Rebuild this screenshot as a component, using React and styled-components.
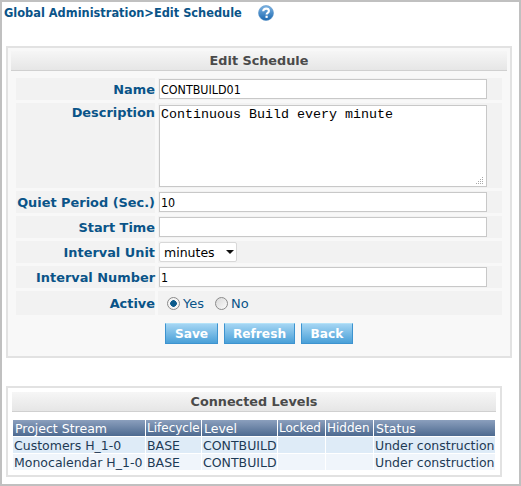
import styled, { createGlobalStyle } from 'styled-components';

const Global = createGlobalStyle`
  html, body { margin: 0; padding: 0; background: #fff; }
  body { font-family: "DejaVu Sans", Verdana, sans-serif; font-size: 12px; }
`;

const Frame = styled.div`
  box-sizing: border-box;
  width: 521px;
  height: 486px;
  border: 2px solid #c0c0c0;
  padding: 0 4px;
  background: #fff;
`;

const Crumbs = styled.div`
  display: flex;
  align-items: center;
  height: 22px;
  margin-left: -2px;
  font-size: 11.4px;
  font-weight: bold;
  color: #0a5488;
`;

const HelpIcon = styled.svg`
  width: 16px;
  height: 16px;
  margin-left: 16px;
`;

const Panel = styled.section`
  box-sizing: border-box;
  width: ${p => p.$width}px;
  height: ${p => p.$height}px;
  margin-top: ${p => p.$top}px;
  padding: ${p => p.$pad};
  border: 2px solid #e2e2e2;
  background: ${p => p.$bg};
`;

const PanelTitle = styled.h2`
  box-sizing: border-box;
  height: 20px;
  margin: 0;
  border-bottom: 1px solid #d0d0d0;
  background: linear-gradient(#f6f6f6, #e6e6e6);
  font-size: 12.8px;
  line-height: 20px;
  font-weight: bold;
  text-align: center;
  color: #4a4a4a;
`;

const Form = styled.div`
  display: grid;
  grid-template-columns: 139px 344px;
  column-gap: 3px;
  row-gap: 3px;
  margin: 7px 0 0 5px;
`;

const Label = styled.div`
  box-sizing: border-box;
  height: ${p => p.$h}px;
  padding: ${p => (p.$top ? '2px 0 0' : '0')};
  background: #f2f2f2;
  font-size: 12.9px;
  font-weight: bold;
  line-height: ${p => (p.$top ? '15px' : `${p.$h + 2}px`)};
  text-align: right;
  color: #0a5488;
`;

const Value = styled.div`
  box-sizing: border-box;
  display: flex;
  align-items: ${p => (p.$top ? 'flex-start' : 'center')};
  height: ${p => p.$h}px;
  padding: ${p => (p.$top ? '2px 15px 0 1px' : '0 15px 0 1px')};
  background: #f2f2f2;
`;

const TextInput = styled.input`
  box-sizing: border-box;
  width: 328px;
  height: 20px;
  padding: 0 1px;
  border: 1px solid #c8c8c8;
  outline: none;
  background: #fff;
  font-family: "DejaVu Sans Condensed", "DejaVu Sans", sans-serif;
  font-size: 12.4px;
  color: #000;
`;

const AreaWrap = styled.div`
  position: relative;
  width: 328px;
  height: 82px;
`;

const TextArea = styled.textarea`
  display: block;
  box-sizing: border-box;
  width: 100%;
  height: 100%;
  margin: 0;
  padding: 1px;
  border: 1px solid #c8c8c8;
  outline: none;
  resize: none;
  background: #fff;
  font-family: "Liberation Mono", monospace;
  font-size: 13.33px;
  color: #000;
`;

const Grip = styled.svg`
  position: absolute;
  right: 3px;
  bottom: 3px;
  width: 8px;
  height: 7px;
`;

const SelectWrap = styled.div`
  position: relative;
  width: 78px;
  height: 20px;
`;

const Select = styled.select`
  box-sizing: border-box;
  width: 100%;
  height: 100%;
  padding: 0 0 0 4px;
  border: 1px solid #d8d8d8;
  border-radius: 2px;
  outline: none;
  appearance: none;
  background: #fff;
  font-family: "DejaVu Sans", sans-serif;
  font-size: 12.5px;
  color: #000;
`;

const Caret = styled.span`
  position: absolute;
  top: 8px;
  right: 3px;
  width: 0;
  height: 0;
  border: 4px solid transparent;
  border-top: 4px solid #111;
  border-bottom: 0;
  pointer-events: none;
`;

const RadioGroup = styled.div`
  display: flex;
  align-items: center;
  padding-left: 8px;
  color: #0a5488;
  font-size: 13px;
`;

const RadioLabel = styled.label`
  display: flex;
  align-items: center;
  margin-right: 11px;
`;

const Radio = styled.input`
  appearance: none;
  box-sizing: border-box;
  width: 13px;
  height: 13px;
  margin: 1px 3px 0 0;
  border: 1px solid #8a8a8a;
  border-radius: 50%;
  background: ${p => (p.checked
    ? 'radial-gradient(circle, #0b5a8c 0 3px, #f4f4f4 3.6px)'
    : 'linear-gradient(135deg, #d8d8d8, #fbfbfb)')};
`;

const Buttons = styled.div`
  display: flex;
  gap: 6px;
  margin: 8px 0 0 154px;
`;

const Button = styled.button`
  box-sizing: border-box;
  height: 21px;
  padding: 0;
  width: ${p => p.$w}px;
  border: 1px solid #3d93cf;
  border-top-color: #b4e2f8;
  background: linear-gradient(#a4d5f3, #4aa0d8);
  font-family: "DejaVu Sans", sans-serif;
  font-size: 12.2px;
  font-weight: bold;
  color: #fff;
`;

const Table = styled.table`
  width: 484px;
  margin: 7px 0 0;
  border-collapse: separate;
  border-spacing: 1px;
  table-layout: fixed;
  font-size: 12.5px;
`;

const Th = styled.th`
  height: 16px;
  padding: 0 0 0 ${p => (p.$tight ? 1 : 2)}px;
  background: linear-gradient(#8b9fbd, #4d6a90);
  font-size: ${p => (p.$tight ? '12px' : 'inherit')};
  font-weight: normal;
  text-align: left;
  color: #fff;
  white-space: nowrap;
  overflow: hidden;
`;

const Td = styled.td`
  height: 16px;
  padding: 0 0 0 1px;
  background: ${p => (p.$alt ? '#f0f5fb' : '#deebf7')};
  color: #1d3a55;
  white-space: nowrap;
  overflow: hidden;
`;

const columns = [
  ['Project Stream', 132],
  ['Lifecycle', 55, true],
  ['Level', 75],
  ['Locked', 47, true],
  ['Hidden', 47, true],
  ['Status', 121],
];

const levels = [
  ['Customers H_1-0', 'BASE', 'CONTBUILD', '', '', 'Under construction'],
  ['Monocalendar H_1-0', 'BASE', 'CONTBUILD', '', '', 'Under construction'],
];

const gripDots = [[6, 0], [4, 2], [6, 2], [2, 4], [4, 4], [6, 4], [0, 6], [2, 6], [4, 6], [6, 6]];

const App = () => (
  <Frame>
    <Global />
    <Crumbs>
      Global Administration&gt;Edit Schedule
      <HelpIcon viewBox="0 0 16 16">
        <defs>
          <linearGradient id="help" x1="0" y1="0" x2="0" y2="1">
            <stop offset="0" stopColor="#7db4e4" />
            <stop offset="1" stopColor="#1c68b0" />
          </linearGradient>
        </defs>
        <circle cx="8" cy="8" r="7.5" fill="url(#help)" stroke="#5b93c8" strokeWidth="0.6" />
        <path d="M5.2 6.2c0-1.6 1.2-2.6 2.9-2.6s2.8.9 2.8 2.3c0 1.9-2.3 1.9-2.3 3.5" fill="none" stroke="#fff" strokeWidth="2.1" />
        <rect x="7.5" y="10.7" width="2.2" height="2.2" fill="#fff" />
      </HelpIcon>
    </Crumbs>

    <Panel $width={506} $height={312} $top={22} $pad="3px" $bg="#f8f8f8">
      <PanelTitle>Edit Schedule</PanelTitle>
      <Form>
        <Label $h={22}>Name</Label>
        <Value $h={22}><TextInput readOnly value="CONTBUILD01" /></Value>
        <Label $h={85} $top>Description</Label>
        <Value $h={85} $top>
          <AreaWrap>
            <TextArea readOnly value="Continuous Build every minute" />
            <Grip viewBox="0 0 8 7">
              {gripDots.map(([x, y]) => <rect key={`${x}-${y}`} x={x} y={y} width="1" height="1" fill="#a8a8a8" />)}
            </Grip>
          </AreaWrap>
        </Value>
        <Label $h={22}>Quiet Period (Sec.)</Label>
        <Value $h={22}><TextInput readOnly value="10" /></Value>
        <Label $h={22}>Start Time</Label>
        <Value $h={22}><TextInput readOnly value="" /></Value>
        <Label $h={22}>Interval Unit</Label>
        <Value $h={22}>
          <SelectWrap>
            <Select defaultValue="minutes">
              <option>minutes</option>
              <option>hours</option>
              <option>days</option>
            </Select>
            <Caret />
          </SelectWrap>
        </Value>
        <Label $h={22}>Interval Number</Label>
        <Value $h={22}><TextInput readOnly value="1" /></Value>
        <Label $h={24}>Active</Label>
        <Value $h={24}>
          <RadioGroup>
            <RadioLabel><Radio type="radio" name="active" checked readOnly />Yes</RadioLabel>
            <RadioLabel><Radio type="radio" name="active" readOnly />No</RadioLabel>
          </RadioGroup>
        </Value>
      </Form>
      <Buttons>
        <Button $w={53}>Save</Button>
        <Button $w={71}>Refresh</Button>
        <Button $w={52}>Back</Button>
      </Buttons>
    </Panel>

    <Panel $width={496} $height={91} $top={28} $pad="4px 4px" $bg="#fff">
      <PanelTitle>Connected Levels</PanelTitle>
      <Table>
        <colgroup>
          {columns.map(([name, w]) => <col key={name} style={{ width: w }} />)}
        </colgroup>
        <thead>
          <tr>{columns.map(([name, , tight]) => <Th key={name} $tight={tight}>{name}</Th>)}</tr>
        </thead>
        <tbody>
          {levels.map((row, i) => (
            <tr key={row[0]}>
              {row.map((cell, j) => <Td key={j} $alt={i === 1}>{cell}</Td>)}
            </tr>
          ))}
        </tbody>
      </Table>
    </Panel>
  </Frame>
);

export default App;
